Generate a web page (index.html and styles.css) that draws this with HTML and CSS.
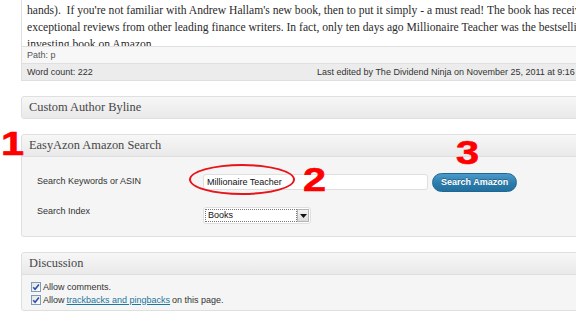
FILE: index.html
```html
<!DOCTYPE html>
<html lang="en">
<head>
<meta charset="utf-8">
<title>Edit Post</title>
<link rel="stylesheet" href="styles.css">
</head>
<body>
<div class="page">
  <div class="editor">
    <div class="editor-text">
      <p class="line">hands).&nbsp; If you're not familiar with Andrew Hallam's new book, then to put it simply - a must read! The book has received some</p>
      <p class="line">exceptional reviews from other leading finance writers. In fact, only ten days ago Millionaire Teacher was the bestselling</p>
      <p class="line">investing book on Amazon.</p>
    </div>
    <div class="path">Path: p</div>
    <div class="status">
      <span class="wc">Word count: 222</span>
      <span class="edited">Last edited by The Dividend Ninja on November 25, 2011 at 9:16 pm</span>
    </div>
  </div>

  <div class="postbox">
    <h3 class="hndle">Custom Author Byline</h3>
  </div>

  <div class="postbox">
    <h3 class="hndle open">EasyAzon Amazon Search</h3>
    <div class="inside form">
      <div class="row row-search">
        <span class="lbl">Search Keywords or ASIN</span>
        <span class="input">Millionaire Teacher</span>
        <span class="button">Search Amazon</span>
      </div>
      <div class="row row-index">
        <span class="lbl lbl-top">Search Index</span>
        <span class="select">
          <span class="select-val">Books</span>
          <span class="select-arrow"><svg width="7" height="4" viewBox="0 0 7 4"><path d="M0 0H7L3.5 4Z" fill="#111"/></svg></span>
        </span>
      </div>
    </div>
  </div>

  <div class="postbox">
    <h3 class="hndle open">Discussion</h3>
    <div class="inside checks">
      <div class="check"><span class="cb"><svg width="8" height="8" viewBox="0 0 8 8"><path d="M1.2 4.2L3.1 6.2L6.9 1.4" fill="none" stroke="#2a4fb0" stroke-width="1.6"/></svg></span>Allow comments.</div>
      <div class="check"><span class="cb"><svg width="8" height="8" viewBox="0 0 8 8"><path d="M1.2 4.2L3.1 6.2L6.9 1.4" fill="none" stroke="#2a4fb0" stroke-width="1.6"/></svg></span>Allow <a class="link" href="#">trackbacks and pingbacks</a> on this page.</div>
    </div>
  </div>
</div>

<span class="ellipse"></span>
<span class="callout n1">1</span>
<span class="callout n2">2</span>
<span class="callout n3">3</span>
</body>
</html>
```
FILE: styles.css
```css
html, body {
  margin: 0;
  padding: 0;
  width: 576px;
  height: 330px;
  overflow: hidden;
  background: #fff;
}
body {
  position: relative;
  font-family: "Liberation Sans", Arial, sans-serif;
  font-size: 9px;
  color: #333;
}
.page {
  margin-left: 21px;
  width: 640px;
}

/* editor */
.editor {
  border: 1px solid #dfdfdf;
  border-top: 0;
  margin-bottom: 15px;
}
.editor-text {
  height: 44px;
  padding: 2px 0 0 5px;
  overflow: hidden;
  background: #fff;
}
.line {
  margin: 0;
  white-space: nowrap;
  font-family: "Liberation Serif", "Times New Roman", serif;
  font-size: 11.6px;
  line-height: 17px;
  color: #2a2a2a;
}
.path {
  border-top: 1px solid #dfdfdf;
  height: 16px;
  line-height: 16px;
  padding-left: 5px;
  background: #f7f7f7;
  color: #555;
}
.status {
  display: flex;
  border-top: 1px solid #dfdfdf;
  height: 16px;
  line-height: 16px;
  padding-left: 5px;
  background: #ececec;
  color: #333;
  white-space: nowrap;
}
.wc { width: 290px; flex: none; }

/* postboxes */
.postbox {
  border: 1px solid #dfdfdf;
  border-radius: 3px;
  background: #f5f5f5;
  margin-bottom: 15px;
}
.hndle {
  margin: 0;
  height: 21px;
  line-height: 21px;
  padding-left: 7px;
  font-family: "Liberation Serif", "Times New Roman", serif;
  font-weight: normal;
  font-size: 12.4px;
  color: #464646;
  background: linear-gradient(to bottom, #f7f7f7, #e9e9e9);
  border-radius: 3px 3px 0 0;
}
.hndle.open {
  border-bottom: 1px solid #dfdfdf;
}

.form {
  height: 79px;
  box-sizing: border-box;
  padding: 16px 0 0 15px;
}
.row {
  display: flex;
  align-items: flex-start;
}
.row-search { height: 19px; margin-bottom: 13px; }
.lbl {
  width: 166px;
  flex: none;
  line-height: 12px;
  padding-top: 2px;
  color: #333;
}
.lbl-top { padding-top: 0; }
.input {
  box-sizing: border-box;
  width: 225px;
  height: 16px;
  margin-top: 1px;
  border: 1px solid #dfdfdf;
  border-radius: 3px;
  background: #fff;
  padding-left: 3px;
  line-height: 14px;
  color: #111;
}
.button {
  box-sizing: border-box;
  height: 19px;
  margin-left: 4px;
  padding: 0 8px;
  line-height: 17px;
  border: 1px solid #1d6893;
  border-radius: 10px;
  background: linear-gradient(to bottom, #4a9bcb, #2b7bab 55%, #21709f);
  color: #fff;
  font-weight: bold;
  text-shadow: 0 -1px 0 rgba(0,0,0,0.3);
}
.select {
  display: flex;
  box-sizing: border-box;
  width: 108px;
  height: 17px;
  margin-top: 2px;
  padding: 1px;
  border: 1px solid #dfdfdf;
  border-radius: 3px;
  background: #fff;
}
.select-val {
  flex: 1;
  box-sizing: border-box;
  border: 1px dotted #777;
  padding-left: 2px;
  line-height: 11px;
  color: #111;
}
.select-arrow {
  box-sizing: border-box;
  width: 12px;
  flex: none;
  display: flex;
  align-items: center;
  justify-content: center;
  border: 1px solid #b5b5b5;
  background: linear-gradient(to bottom, #f4f4f4, #dcdcdc);
}

.checks {
  height: 35px;
  box-sizing: border-box;
  padding: 6px 0 0 9px;
}
.check {
  display: flex;
  align-items: center;
  height: 12.5px;
  line-height: 12.5px;
  color: #333;
}
.cb {
  box-sizing: border-box;
  width: 10px;
  height: 10px;
  margin-right: 2px;
  border: 1px solid #7f9db9;
  background: linear-gradient(to bottom right, #e4e4e0, #fff);
  display: flex;
  align-items: center;
  justify-content: center;
}
.link {
  color: #21759b;
  text-decoration: underline;
  margin: 0 2px 0 2px;
}

/* annotations */
.ellipse {
  position: absolute;
  left: 189px;
  top: 164px;
  width: 106px;
  height: 31px;
  box-sizing: border-box;
  border: 2px solid #e8141a;
  border-radius: 50%;
}
.callout {
  position: absolute;
  font-family: "Liberation Sans", Arial, sans-serif;
  font-weight: bold;
  font-size: 34px;
  line-height: 34px;
  color: #ff0000;
  transform: scaleX(1.22);
  transform-origin: left top;
  -webkit-text-stroke: 0.6px #ff0000;
}
.n1 { left: 1px; top: 126px; }
.n2 { left: 303px; top: 162px; }
.n3 { left: 456px; top: 135px; }
```
